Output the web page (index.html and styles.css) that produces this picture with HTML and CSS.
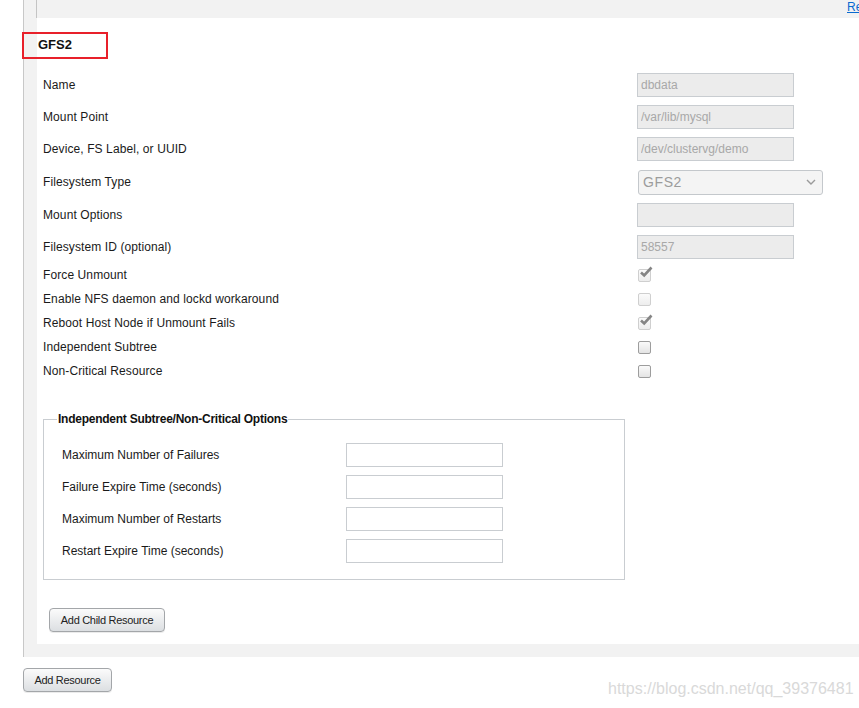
FILE: index.html
```html
<!DOCTYPE html>
<html>
<head>
<meta charset="utf-8">
<link rel="stylesheet" href="styles.css">
</head>
<body>
<div class="panel">
  <div class="topband"><a href="#" class="link">Remove</a></div>
  <div class="resource">
    <h3 class="res-title">GFS2</h3>
    <div class="form">
      <div class="row"><span class="label">Name</span><input class="field" value="dbdata" disabled></div>
      <div class="row"><span class="label">Mount Point</span><input class="field" value="/var/lib/mysql" disabled></div>
      <div class="row"><span class="label">Device, FS Label, or UUID</span><input class="field" value="/dev/clustervg/demo" disabled></div>
      <div class="row row-select"><span class="label">Filesystem Type</span>
        <div class="select"><span>GFS2</span>
          <svg class="chev" width="10" height="6" viewBox="0 0 10 6"><path d="M1 1 L5 5 L9 1" fill="none" stroke="#9a9a9a" stroke-width="1.4"/></svg>
        </div>
      </div>
      <div class="row"><span class="label">Mount Options</span><input class="field" value="" disabled></div>
      <div class="row"><span class="label">Filesystem ID (optional)</span><input class="field" value="58557" disabled></div>
      <div class="row row-check"><span class="label">Force Unmount</span><span class="cb disabled checked"><svg class="tick" width="14" height="12" viewBox="0 0 14 12"><path d="M2 6.5 L5.2 9.5 L12.5 1.5" fill="none" stroke="#858585" stroke-width="2.6"/></svg></span></div>
      <div class="row row-check"><span class="label">Enable NFS daemon and lockd workaround</span><span class="cb disabled"></span></div>
      <div class="row row-check"><span class="label">Reboot Host Node if Unmount Fails</span><span class="cb disabled checked"><svg class="tick" width="14" height="12" viewBox="0 0 14 12"><path d="M2 6.5 L5.2 9.5 L12.5 1.5" fill="none" stroke="#858585" stroke-width="2.6"/></svg></span></div>
      <div class="row row-check"><span class="label">Independent Subtree</span><span class="cb"></span></div>
      <div class="row row-check"><span class="label">Non-Critical Resource</span><span class="cb"></span></div>
    </div>
    <fieldset class="options">
      <legend>Independent Subtree/Non-Critical Options</legend>
      <div class="orow"><span class="olabel">Maximum Number of Failures</span><input class="ofield"></div>
      <div class="orow"><span class="olabel">Failure Expire Time (seconds)</span><input class="ofield"></div>
      <div class="orow"><span class="olabel">Maximum Number of Restarts</span><input class="ofield"></div>
      <div class="orow"><span class="olabel">Restart Expire Time (seconds)</span><input class="ofield"></div>
    </fieldset>
    <button class="btn btn-child">Add Child Resource</button>
  </div>
</div>
<button class="btn btn-add">Add Resource</button>
<div class="watermark">https://blog.csdn.net/qq_39376481</div>
<div class="highlight"></div>
</body>
</html>
```
FILE: styles.css
```css
html, body {
  margin: 0;
  padding: 0;
  background: #ffffff;
  overflow: hidden;
}
body {
  position: relative;
  width: 859px;
  height: 708px;
  font-family: "Liberation Sans", Arial, sans-serif;
  font-size: 12px;
  color: #1a1a1a;
}
.panel {
  margin-left: 23px;
  border-left: 1px solid #c8c8c8;
  background: #f2f2f2;
  padding: 0 0 13px 12px;
}
.topband {
  height: 18px;
  border-left: 1px solid #c4c4c4;
  padding-left: 810px;
  white-space: nowrap;
  overflow: hidden;
}
.link {
  color: #0a6ad0;
  font-size: 12px;
  line-height: 11px;
  display: inline-block;
  text-decoration: underline;
}
.resource {
  background: #ffffff;
  margin-left: 1px;
  padding: 14px 0 12px 6px;
}
.res-title {
  margin: 0 0 11px -5px;
  height: 26px;
  line-height: 26px;
  font-size: 13px;
  font-weight: bold;
  color: #111;
}
.form {
  display: flex;
  flex-direction: column;
}
.row {
  display: flex;
  align-items: center;
  height: 32px;
}
.row-select { height: 34px; }
.row-check { height: 24px; }
.label {
  width: 594px;
  flex: none;
  letter-spacing: 0.1px;
}
.field {
  box-sizing: border-box;
  width: 157px;
  height: 24px;
  margin: 0;
  padding: 0 3px;
  border: 1px solid #c9cdd1;
  background: #ececec;
  color: #a8a8a8;
  font-family: "Liberation Sans", Arial, sans-serif;
  font-size: 12px;
}
.select {
  box-sizing: border-box;
  width: 185px;
  height: 25px;
  margin-left: 1px;
  border: 1px solid #c4c8cc;
  border-radius: 3px;
  background: #f4f4f4;
  display: flex;
  align-items: center;
  justify-content: space-between;
  padding: 0 6px 0 4px;
  color: #9c9c9c;
  font-size: 14px;
  letter-spacing: 0.6px;
}
.chev { display: block; }
.cb {
  position: relative;
  box-sizing: border-box;
  width: 13px;
  height: 13px;
  margin-left: 1px;
  border: 1px solid #9d9d9d;
  border-radius: 2px;
  background: linear-gradient(#fafafa, #e4e4e4);
}
.cb.disabled {
  border-color: #cfcfcf;
  background: linear-gradient(#fbfbfb, #ededed);
}
.tick {
  position: absolute;
  left: 0;
  top: -4px;
}
.options {
  box-sizing: border-box;
  width: 582px;
  margin: 28px 0 0 0;
  padding: 12px 0 12px 18px;
  border: 1px solid #c9cdd1;
  min-width: 0;
}
.options legend {
  margin-left: -5px;
  padding: 0 1px;
  font-weight: bold;
  font-size: 12px;
  line-height: 16px;
  letter-spacing: -0.25px;
  color: #111;
}
.orow {
  display: flex;
  align-items: center;
  height: 32px;
}
.olabel {
  width: 284px;
  flex: none;
}
.ofield {
  box-sizing: border-box;
  width: 157px;
  height: 24px;
  margin: 0;
  border: 1px solid #c9cdd1;
  background: #ffffff;
}
.btn {
  display: block;
  box-sizing: border-box;
  height: 24px;
  padding: 0 9px;
  border: 1px solid #a3a6a9;
  border-radius: 4px;
  background: linear-gradient(#fbfbfb, #dcdfe2);
  font-family: "Liberation Sans", Arial, sans-serif;
  font-size: 11px;
  letter-spacing: -0.3px;
  color: #222;
  box-shadow: 0 1px 0 rgba(0,0,0,0.08);
}
.btn-child {
  margin: 28px 0 0 6px;
  width: 116px;
}
.btn-add {
  margin: 11px 0 0 23px;
  width: 89px;
}
.watermark {
  position: absolute;
  left: 608px;
  top: 680px;
  font-size: 16px;
  line-height: 18px;
  color: #d9d9d9;
  white-space: nowrap;
}
.highlight {
  position: absolute;
  left: 22px;
  top: 32px;
  width: 86px;
  height: 27px;
  box-sizing: border-box;
  border: 2px solid #e8202a;
}
```
